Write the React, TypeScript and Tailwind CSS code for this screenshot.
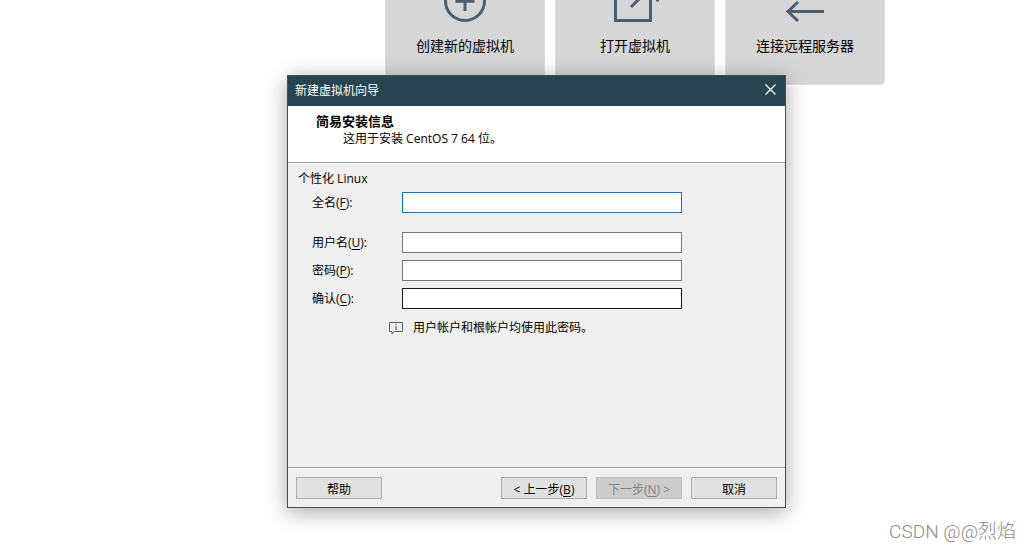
import React from 'react';
import { clsx } from 'clsx';

interface TileProps {
  label: string;
  children: React.ReactNode;
}

const Tile: React.FC<TileProps> = ({ label, children }) => (
  <button
    type="button"
    className="flex h-[85px] w-40 flex-col items-center gap-3 rounded-b-[5px] border border-t-0 border-[#dedede] bg-[#d6d6d6] text-sm leading-5 text-black"
  >
    <svg
      width="60"
      height="24"
      viewBox="0 0 60 24"
      fill="none"
      stroke="#4a5f6d"
      strokeWidth="3"
      aria-hidden="true"
    >
      {children}
    </svg>
    {label}
  </button>
);

interface FieldProps {
  id: string;
  label: string;
  accessKey: string;
  type?: string;
  border: string;
  className?: string;
}

const Field: React.FC<FieldProps> = ({ id, label, accessKey, type = 'text', border, className }) => (
  <div className={clsx('flex items-center', className)}>
    <label htmlFor={id} className="w-[90px] shrink-0">
      {label}(<u className="underline-offset-2">{accessKey}</u>):
    </label>
    <input
      id={id}
      type={type}
      accessKey={accessKey}
      className={clsx('h-[21px] w-[280px] border bg-white px-1 outline-none', border)}
    />
  </div>
);

interface WizardButtonProps {
  disabled?: boolean;
  className?: string;
  children: React.ReactNode;
}

const WizardButton: React.FC<WizardButtonProps> = ({ disabled, className, children }) => (
  <button
    type="button"
    disabled={disabled}
    className={clsx(
      'flex h-[22px] w-[86px] items-center justify-center border pt-1 whitespace-pre',
      disabled ? 'border-[#bfbfbf] bg-[#cccccc] text-[#838383]' : 'border-[#adadad] bg-[#e1e1e1]',
      className
    )}
  >
    {children}
  </button>
);

export default function App() {
  return (
    <div className="relative min-h-screen overflow-hidden bg-white font-['Open_Sans','Noto_Sans_CJK_SC',sans-serif] text-xs leading-4 text-black">
      {/* Home page shortcuts */}
      <main className="flex justify-center gap-2.5 pl-60">
        <Tile label="创建新的虚拟机">
          <circle cx="30" cy="1" r="19.5" />
          <path d="M20.5 1.2H39.5M30 -9V11" />
        </Tile>
        <Tile label="打开虚拟机">
          <path d="M10.5 -14V20.5H45.5V0" />
          <path d="M26 7L38 -5" />
          <path d="M51 0H54" />
        </Tile>
        <Tile label="连接远程服务器">
          <path d="M49 11.5H13M23 2L13 11.5L23 21" />
        </Tile>
      </main>

      {/* New virtual machine wizard */}
      <section
        role="dialog"
        aria-labelledby="wizard-title"
        className="absolute top-[75px] left-[287px] flex w-[499px] flex-col border border-[#3d5359] bg-[#efefef] shadow-[0_4px_20px_rgba(0,0,0,0.35)]"
      >
        <header className="flex h-[30px] items-center justify-between bg-[#264550] px-[7px] text-white">
          <h1 id="wizard-title">新建虚拟机向导</h1>
          <button type="button" aria-label="关闭" className="px-0.5 pb-1">
            <svg width="11" height="11" viewBox="0 0 11 11" stroke="white" strokeWidth="1.2">
              <path d="M0.5 0.5L10.5 10.5M10.5 0.5L0.5 10.5" />
            </svg>
          </button>
        </header>

        <div className="h-[57px] border-b border-[#a0a0a0] bg-white pt-[7px] pl-7">
          <h2 className="text-[13px] leading-4 font-bold">简易安装信息</h2>
          <p className="pt-0.5 pl-[27px]">这用于安装 CentOS 7 64 位。</p>
        </div>

        <form className="h-[304px] border-t border-white pt-[7px] pl-2.5">
          <fieldset>
            <legend>个性化 Linux</legend>
            <div className="flex flex-col gap-[7px] pt-[5px] pl-[14px]">
              <Field id="fullname" label="全名" accessKey="F" border="border-[#0078d7]" className="mb-3" />
              <Field id="username" label="用户名" accessKey="U" border="border-[#7a7a7a]" />
              <Field id="password" label="密码" accessKey="P" type="password" border="border-[#7a7a7a]" />
              <Field id="confirm" label="确认" accessKey="C" type="password" border="border-[#171717]" />
            </div>
          </fieldset>
          <p className="flex items-center gap-2.5 pt-[11px] pl-[91px]">
            <svg width="14" height="13" viewBox="0 0 14 13" fill="none" aria-hidden="true">
              <path d="M0.5 0.5H13.5V9.5H5.5L3 12V9.5H0.5Z" stroke="#4f6270" />
              <path d="M6 2H8V3H6ZM6 4H8V8H6Z" fill="#8d99a2" />
            </svg>
            用户帐户和根帐户均使用此密码。
          </p>
        </form>

        <footer className="flex border-t border-[#a0a0a0]">
          <div className="flex flex-1 gap-[9px] border-t border-white p-2">
            <WizardButton className="mr-auto">帮助</WizardButton>
            <WizardButton>
              &lt; 上一步(<u className="underline-offset-2">B</u>)
            </WizardButton>
            <WizardButton disabled>
              下一步(<u className="underline-offset-2">N</u>) &gt;
            </WizardButton>
            <WizardButton>取消</WizardButton>
          </div>
        </footer>
      </section>

      <span className="absolute right-[14px] bottom-2 font-['Roboto','Noto_Sans_CJK_SC',sans-serif] text-[19px] leading-6 font-light text-[#8c8c8c]">
        CSDN @@烈焰
      </span>
    </div>
  );
}
